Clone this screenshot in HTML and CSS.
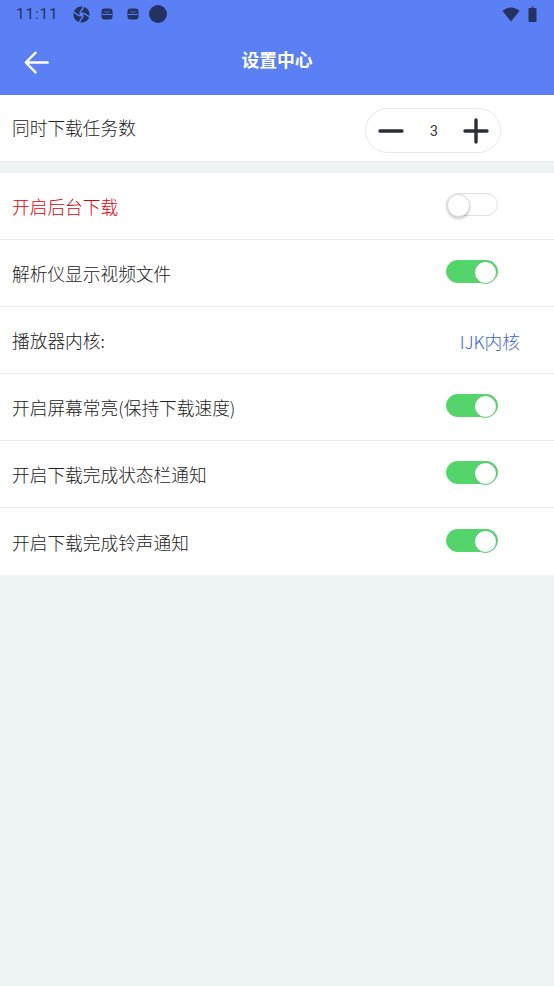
FILE: index.html
```html
<!DOCTYPE html>
<html lang="zh-CN">
<head>
  <meta charset="UTF-8">
  <meta name="viewport" content="width=device-width, initial-scale=1.0">
  <title>设置中心</title>
  <link rel="stylesheet" href="styles.css">
</head>
<body>
  <header class="header">
    <div class="status-bar">
      <span class="clock">11:11</span>
      <svg class="status-icon" width="17" height="17" viewBox="0 0 18 18">
        <circle cx="9" cy="9" r="8.6" fill="#233262"/>
        <path d="M7.2 7.2 11.6 0.4M10.8 7.2 17.6 11.6M10.8 10.8 6.4 17.6M7.2 10.8 0.4 6.4" stroke="#5b7ff5" stroke-width="1.6"/>
        <rect x="7" y="7" width="4" height="4" fill="#5b7ff5"/>
      </svg>
      <svg class="status-icon small" width="12" height="12" viewBox="0 0 12 12">
        <rect x="0.5" y="0.5" width="11" height="11" rx="3" fill="#233262"/>
        <path d="M1 6.5h10" stroke="#5b7ff5" stroke-width="1"/>
        <path d="M4 3v1.2h4V3" stroke="#5b7ff5" stroke-width="0.7" fill="none"/>
      </svg>
      <svg class="status-icon small" width="12" height="12" viewBox="0 0 12 12">
        <rect x="0.5" y="0.5" width="11" height="11" rx="3" fill="#233262"/>
        <path d="M1 6.5h10" stroke="#5b7ff5" stroke-width="1"/>
        <path d="M4 3v1.2h4V3" stroke="#5b7ff5" stroke-width="0.7" fill="none"/>
      </svg>
      <span class="status-dot"></span>
      <span class="status-right">
        <svg width="18" height="15" viewBox="0 0 18 15">
          <path d="M0.5 4C2.8 1.8 5.7 0.6 9 0.6s6.2 1.2 8.5 3.4L9 14.6Z" fill="#233262"/>
        </svg>
        <svg width="9" height="16" viewBox="0 0 9 16">
          <path d="M3 0h3v2H3Z" fill="#4a5f9f"/>
          <rect x="0.5" y="2" width="8" height="14" rx="1.2" fill="#233262"/>
        </svg>
      </span>
    </div>
    <div class="toolbar">
      <svg class="back" width="25" height="23" viewBox="0 0 25 23">
        <path d="M23.7 11.5H2M11.6 1.7 1.8 11.5l9.8 9.8" fill="none" stroke="#fff" stroke-width="2.4" stroke-linecap="round" stroke-linejoin="round"/>
      </svg>
      <h1 class="title">设置中心</h1>
    </div>
  </header>

  <section class="group">
    <div class="row">
      <span class="label">同时下载任务数</span>
      <div class="stepper">
        <svg width="26" height="26" viewBox="0 0 26 26"><path d="M2 13h22" stroke="#2b2f38" stroke-width="3.4" stroke-linecap="round"/></svg>
        <span class="count">3</span>
        <svg width="26" height="26" viewBox="0 0 26 26"><path d="M2 13h22M13 2v22" stroke="#2b2f38" stroke-width="3.4" stroke-linecap="round"/></svg>
      </div>
    </div>
  </section>

  <section class="group options">
    <div class="row">
      <span class="label red">开启后台下载</span>
      <span class="switch"></span>
    </div>
    <div class="row">
      <span class="label">解析仪显示视频文件</span>
      <span class="switch on"></span>
    </div>
    <div class="row">
      <span class="label">播放器内核:</span>
      <span class="value">IJK内核</span>
    </div>
    <div class="row">
      <span class="label">开启屏幕常亮(保持下载速度)</span>
      <span class="switch on"></span>
    </div>
    <div class="row">
      <span class="label">开启下载完成状态栏通知</span>
      <span class="switch on"></span>
    </div>
    <div class="row">
      <span class="label">开启下载完成铃声通知</span>
      <span class="switch on"></span>
    </div>
  </section>
</body>
</html>
```

FILE: styles.css
```css
:root {
  --primary-color: #5b7ff5;
  --background: #eef3f4;
  --border-color: #ececec;
  --text-primary: #222;
  --icon-dark: #233262;
  --switch-on: #54d56b;
}

* {
  box-sizing: border-box;
  margin: 0;
  padding: 0;
}

body {
  font-family: "Noto Sans CJK SC", "Roboto", sans-serif;
  background-color: var(--background);
  color: var(--text-primary);
  overflow: hidden;
}

.header {
  height: 95px;
  background-color: var(--primary-color);
}

.status-bar {
  height: 28px;
  display: flex;
  align-items: center;
  padding: 0 17px 0 16px;
  color: var(--icon-dark);
}

.clock {
  font-family: "Roboto", sans-serif;
  font-size: 15.5px;
  letter-spacing: 0.8px;
  margin-right: 14px;
}

.status-icon {
  margin-right: 10px;
}

.status-icon.small {
  margin: 0 13px 0 1px;
}

.status-icon.small + .status-icon.small {
  margin-right: 10px;
}

.status-dot {
  width: 18px;
  height: 18px;
  border-radius: 50%;
  background-color: var(--icon-dark);
}

.status-right {
  margin-left: auto;
  display: flex;
  align-items: center;
  gap: 8px;
}

.toolbar {
  height: 67px;
  position: relative;
  display: flex;
  align-items: center;
  justify-content: center;
}

.back {
  position: absolute;
  left: 24px;
  top: 23px;
}

.title {
  font-size: 17.8px;
  font-weight: 700;
  color: white;
  line-height: 1;
  margin-bottom: 3px;
}

.group {
  background-color: white;
  margin-bottom: 11px;
}

.group:first-of-type {
  border-bottom: 1px solid #e6e9ea;
}

.group:first-of-type .row {
  height: 66px;
}

.row {
  height: 67px;
  display: flex;
  align-items: center;
  justify-content: space-between;
  padding-left: 12px;
  border-bottom: 1px solid var(--border-color);
}

.row:last-child {
  border-bottom: none;
}

.label {
  font-size: 17.7px;
  font-weight: 300;
  line-height: 1;
}

.options .label,
.options .value {
  margin-top: 2px;
}

.red {
  color: #e0000a;
}

.value {
  font-size: 17.7px;
  font-weight: 300;
  color: #3f66e0;
  margin-right: 34px;
}

.stepper {
  width: 136px;
  height: 45px;
  margin-top: 5px;
  margin-right: 53px;
  display: flex;
  align-items: center;
  justify-content: space-between;
  padding: 0 11px 0 12px;
  border: 1px solid #e8e8e8;
  border-radius: 23px;
}

.count {
  font-family: "Roboto", sans-serif;
  font-size: 14px;
  color: #333;
  margin-left: 1px;
}

.switch {
  position: relative;
  width: 52px;
  height: 23px;
  margin-right: 56px;
  margin-bottom: 3px;
  border: 1px solid #e0e0e0;
  border-radius: 12px;
  background-color: white;
}

.switch::after {
  content: "";
  position: absolute;
  left: 0;
  top: 0;
  width: 21px;
  height: 21px;
  border-radius: 50%;
  background-color: white;
  border: 1px solid #d8d8d8;
  box-shadow: 0 2px 3px rgba(0, 0, 0, 0.2);
}

.switch.on {
  background-color: var(--switch-on);
  border-color: var(--switch-on);
}

.switch.on::after {
  left: auto;
  right: 0;
  border-color: #54c56b;
  box-shadow: none;
}
```
